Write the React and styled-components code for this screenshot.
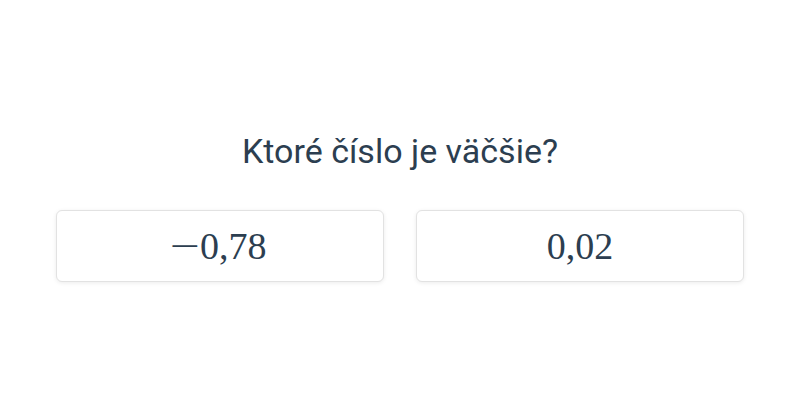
import React from "react";
import styled, { createGlobalStyle } from "styled-components";

const GlobalStyle = createGlobalStyle`
  html, body {
    margin: 0;
    padding: 0;
    background: #fff;
  }
`;

const Page = styled.div`
  min-height: 400px;
  display: flex;
  flex-direction: column;
  align-items: center;
  justify-content: center;
  padding: 11px 56px 0;
  box-sizing: border-box;
  font-family: Roboto, "Noto Sans", sans-serif;
  color: #2c3e50;
`;

const Question = styled.h2`
  margin: 0 0 37px;
  font-size: 34px;
  font-weight: 400;
  line-height: 44px;
  text-align: center;
`;

const Choices = styled.div`
  display: grid;
  grid-template-columns: 1fr 1fr;
  gap: 32px;
  width: 100%;
  max-width: 688px;
`;

const Choice = styled.button`
  height: 72px;
  display: flex;
  align-items: center;
  justify-content: center;
  background: #fff;
  border: 1px solid #e2e2e2;
  border-radius: 6px;
  box-shadow: 0 1px 4px rgba(0, 0, 0, 0.08);
  font-family: "Liberation Serif", "DejaVu Serif", serif;
  font-size: 38px;
  color: #2c3e50;
  cursor: pointer;
`;

const Sign = styled.span`
  display: inline-block;
  margin-right: 5px;
  transform: scaleX(1.4);
`;

const answers = [
  { sign: "\u2212", value: "0,78" },
  { sign: "", value: "0,02" },
];

const App = () => {
  return (
    <>
      <GlobalStyle />
      <Page>
        <Question>Ktoré číslo je väčšie?</Question>
        <Choices>
          {answers.map((a) => (
            <Choice key={a.value}>
              {a.sign && <Sign>{a.sign}</Sign>}
              {a.value}
            </Choice>
          ))}
        </Choices>
      </Page>
    </>
  );
};

export default App;
